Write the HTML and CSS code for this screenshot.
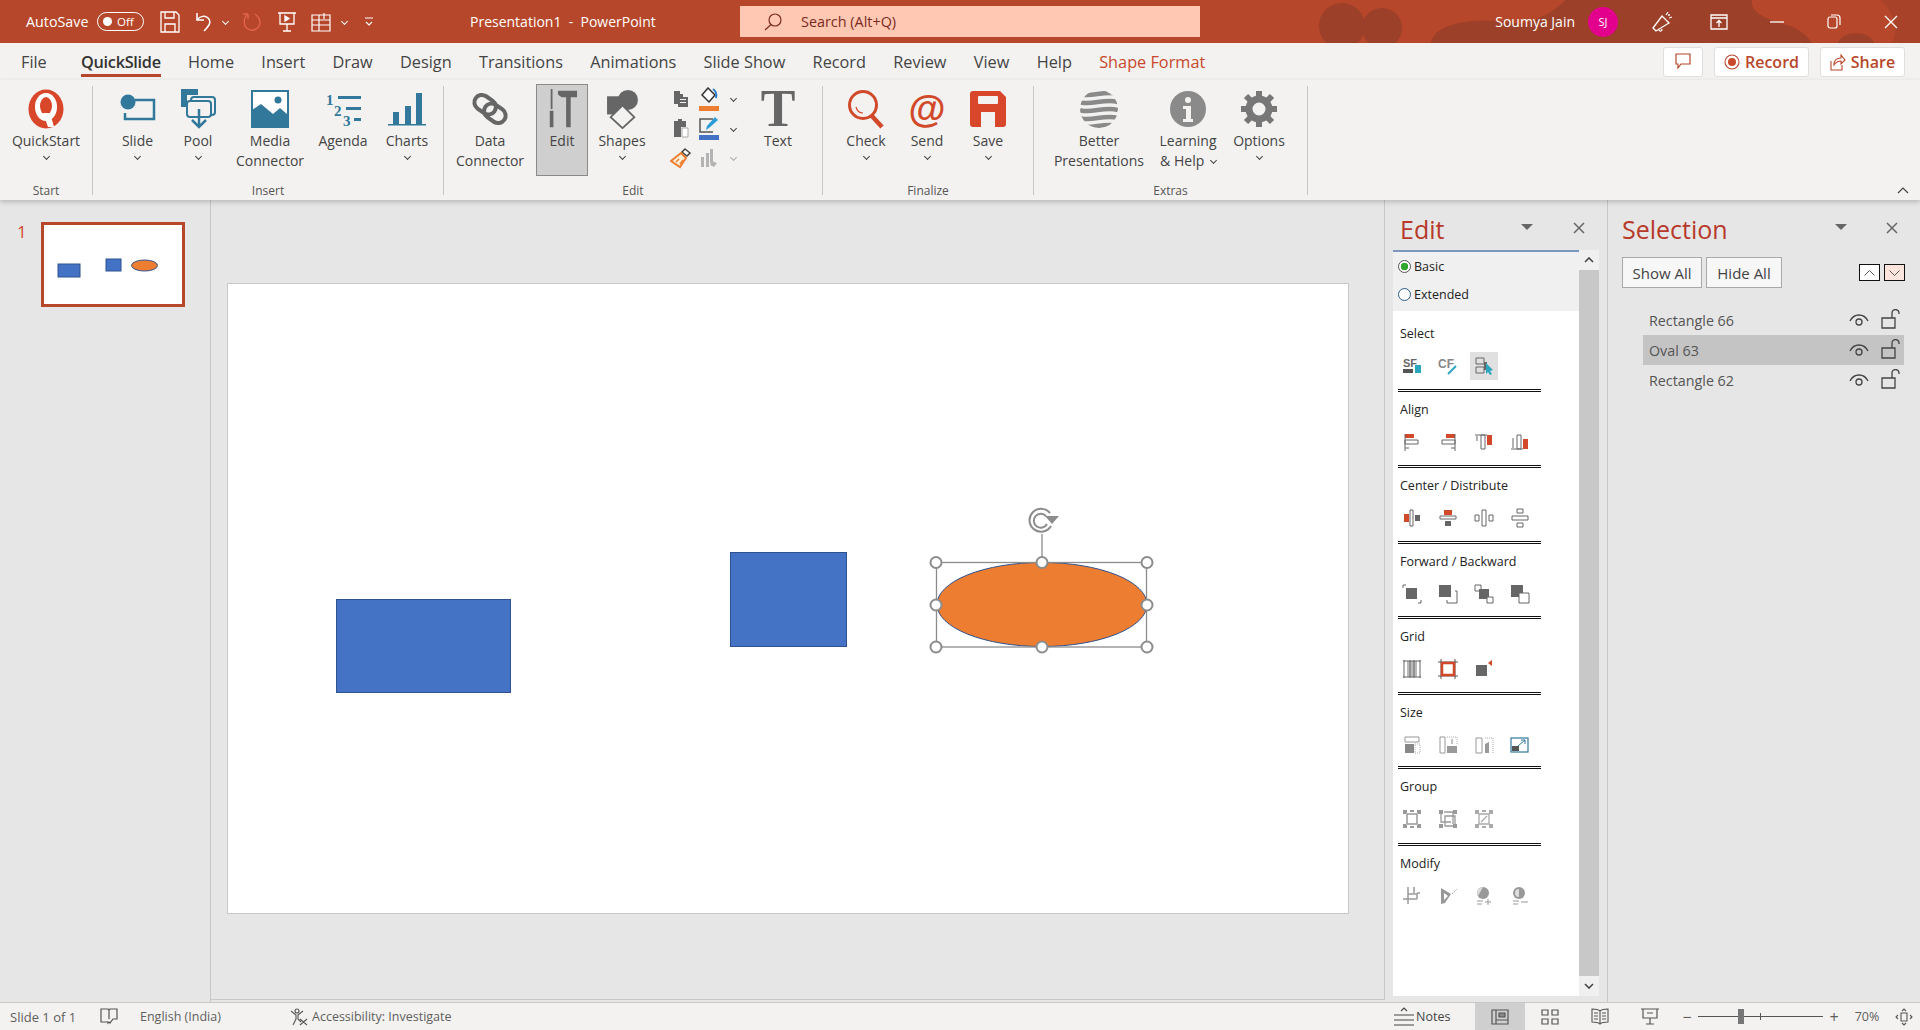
FILE: index.html
```html
<!DOCTYPE html>
<html lang="en">
<head>
    <meta charset="UTF-8">
    <meta name="viewport" content="width=device-width, initial-scale=1.0">
    <title>Presentation1 - PowerPoint</title>
    <link rel="stylesheet" href="styles.css">
</head>
<body>
<div class="app">

    <!-- title bar -->
    <header class="titlebar">
        <svg class="title-art" viewBox="0 0 1920 43" preserveAspectRatio="none">
            <circle cx="1342" cy="26" r="23"/>
            <circle cx="1382" cy="28" r="20"/>
            <path d="M1431 43 C1434 22 1480 16 1520 24 C1540 20 1556 10 1565 0 H1752 C1750 14 1770 20 1790 26 C1800 30 1808 36 1812 43 Z"/>
            <path d="M1838 43 C1842 30 1870 30 1874 43 Z"/>
            <path class="art-soft" d="M1880 0 H1920 V43 H1892 C1900 26 1892 10 1880 0 Z"/>
        </svg>
        <span class="autosave">AutoSave</span>
        <span class="toggle"><i></i>Off</span>
        <svg class="qa ml16" width="20" height="22" viewBox="0 0 20 22" fill="none" stroke="#fff" stroke-width="1.3"><path d="M1 1h15l3 3v17H1z"/><path d="M5 1v6h9V1M5 21v-8h10v8"/></svg>
        <svg class="qa ml15" width="20" height="22" viewBox="0 0 20 22" fill="none" stroke="#fff" stroke-width="1.5"><path d="M2 2v7h7"/><path d="M2 9c3-4 8-5 11-2 4 4 1 8-4 13"/></svg>
        <i class="chev chev-white ml8"></i>
        <svg class="qa ml14" width="20" height="22" viewBox="0 0 20 22" fill="none" stroke="#e4654a" stroke-width="1.4"><path d="M6 3C1 7 1 15 6 18c5 3 11 0 12-6 0-4-2-7-5-9"/><path d="M6 3v5M6 3H1"/></svg>
        <svg class="qa ml15" width="20" height="22" viewBox="0 0 20 22" fill="none" stroke="#fff" stroke-width="1.3"><path d="M1 2h18M3 2v11h14V2M10 13v7M6 20h8"/><path d="M8 5l4 2.500L8 10z" fill="#fff"/></svg>
        <svg class="qa ml14" width="20" height="20" viewBox="0 0 20 20" fill="none" stroke="#fff" stroke-width="1.2"><path d="M1 3h18v16H1zM1 8h18M8 3v16M13 1v6M1 13h18"/></svg>
        <i class="chev chev-white ml11"></i>
        <svg class="qa ml17" width="10" height="10" viewBox="0 0 10 10" fill="none" stroke="#fff" stroke-width="1.100"><path d="M1 1h8M2 5l3 3 3-3"/></svg>
        <span class="doc-title">Presentation1&nbsp; -&nbsp; PowerPoint</span>
        <div class="search">
            <svg width="18" height="18" viewBox="0 0 18 18" fill="none" stroke="#7a2a1c" stroke-width="1.200"><circle cx="11" cy="7" r="6"/><path d="M7 11.500L1 17"/></svg>
            <span>Search (Alt+Q)</span>
        </div>
        <span class="user">Soumya Jain</span>
        <span class="avatar">SJ</span>
        <div class="win w40 ml24">
            <svg width="22" height="22" viewBox="0 0 22 22" fill="none" stroke="#fff" stroke-width="1.300"><path d="M2 17L11 5l7 7-13 8zM5 20l-3-3M8 19c1 2 3 1 3-1M15 4l2-3M18 7l3-1M17 4h2"/></svg>
        </div>
        <div class="win w40 ml17">
            <svg width="18" height="16" viewBox="0 0 18 16" fill="none" stroke="#fff" stroke-width="1.300"><path d="M1 1h16v14H1zM1 4h16M9 13V7M6.500 9L9 6.500 11.500 9"/></svg>
        </div>
        <div class="win w57 ml9"><svg width="14" height="2" viewBox="0 0 14 2"><path d="M0 1h14" stroke="#fff" stroke-width="1.300"/></svg></div>
        <div class="win w57"><svg width="14" height="15" viewBox="0 0 14 15" fill="none" stroke="#fff" stroke-width="1.200"><rect x="1" y="3" width="9" height="11" rx="2"/><path d="M4 1h6a3 3 0 0 1 3 3v7"/></svg></div>
        <div class="win w58"><svg width="14" height="14" viewBox="0 0 14 14"><path d="M1 1l12 12M13 1L1 13" stroke="#fff" stroke-width="1.300"/></svg></div>
    </header>

    <!-- tabs -->
    <nav class="tabs">
        <span class="tab tab-file">File</span>
        <span class="tab tab-active">QuickSlide</span>
        <span class="tab">Home</span>
        <span class="tab">Insert</span>
        <span class="tab">Draw</span>
        <span class="tab">Design</span>
        <span class="tab">Transitions</span>
        <span class="tab">Animations</span>
        <span class="tab">Slide Show</span>
        <span class="tab">Record</span>
        <span class="tab">Review</span>
        <span class="tab">View</span>
        <span class="tab">Help</span>
        <span class="tab tab-context">Shape Format</span>
        <div class="tab-actions">
            <span class="action action-comment">
                <svg width="16" height="17" viewBox="0 0 16 17" fill="none" stroke="#b7472a" stroke-width="1.200"><path d="M1 1h14v10H6l-3 4v-4H1z"/></svg>
            </span>
            <span class="action action-record">
                <svg width="16" height="16" viewBox="0 0 16 16"><circle cx="8" cy="8" r="7" fill="none" stroke="#b7472a" stroke-width="1.100"/><circle cx="8" cy="8" r="4" fill="#c8492b"/></svg>
                Record
            </span>
            <span class="action action-share">
                <svg width="16" height="18" viewBox="0 0 16 18" fill="none" stroke="#b7472a" stroke-width="1.100"><path d="M1 8v9h11v-5M4 12c0-5 3-7 7-7V2l4 5-4 4V8c-3 0-5 1-7 4z"/></svg>
                Share
            </span>
        </div>
    </nav>

    <!-- ribbon -->
    <section class="ribbon">
        <div class="group group-start">
            <div class="group-body">
                <div class="rb w92">
                    <svg class="rb-ic" width="36" height="40" viewBox="0 0 36 40"><ellipse cx="18" cy="20" rx="17.500" ry="19.500" fill="#d9472b"/><ellipse cx="18" cy="18" rx="11" ry="14" fill="#fff"/><ellipse cx="18" cy="17" rx="6" ry="9" fill="#d9472b"/><path d="M15 24l5 14h6l-4-14z" fill="#fff"/></svg>
                    <span class="lbl">QuickStart</span><i class="chev"></i>
                </div>
            </div>
            <div class="group-name">Start</div>
        </div>

        <div class="group group-insert">
            <div class="group-body">
                <div class="rb w55">
                    <svg class="rb-ic" width="36" height="40" viewBox="0 0 36 40"><path d="M15 11h19v19H5v-6" fill="none" stroke="#31789a" stroke-width="2.500"/><circle cx="8" cy="13" r="7.500" fill="#31789a"/></svg>
                    <span class="lbl">Slide</span><i class="chev"></i>
                </div>
                <div class="rb w66">
                    <svg class="rb-ic" width="36" height="40" viewBox="0 0 36 40" fill="none" stroke="#31789a" stroke-width="2"><path d="M1 0h17v6H7v12H1z" fill="#31789a" stroke="none"/><rect x="11" y="8" width="24" height="18" rx="3"/><rect x="7" y="12" width="24" height="16" rx="3" fill="#f3f2f1"/><path d="M19 20v17M12 31l7 7 7-7" stroke-width="2.500"/></svg>
                    <span class="lbl">Pool</span><i class="chev"></i>
                </div>
                <div class="rb w78">
                    <svg class="rb-ic" width="38" height="38" viewBox="0 0 38 38"><rect x="1" y="1" width="36" height="36" fill="#fff" stroke="#31789a" stroke-width="2"/><path d="M1 20l9-6 12 10 7-6 8 7v12H1z" fill="#31789a"/><circle cx="27" cy="10" r="3.500" fill="#31789a"/></svg>
                    <span class="lbl">Media<br>Connector</span>
                </div>
                <div class="rb w68">
                    <svg class="rb-ic" width="38" height="36" viewBox="0 0 38 36" fill="#31789a"><text class="num" x="2" y="14" font-size="15">1</text><text class="num" x="10" y="25" font-size="15">2</text><text class="num" x="19" y="35" font-size="15">3</text><path d="M14 5h23v3H14zM22 16h15v3H22zM30 27h7v3h-7z"/></svg>
                    <span class="lbl">Agenda</span>
                </div>
                <div class="rb w60">
                    <svg class="rb-ic" width="38" height="34" viewBox="0 0 38 34" fill="#31789a"><path d="M5 20h6v12H5zM17 14h6v18h-6zM28 1h6v31h-6z"/><path d="M0 32h38v1.500H0z"/></svg>
                    <span class="lbl">Charts</span><i class="chev"></i>
                </div>
            </div>
            <div class="group-name">Insert</div>
        </div>

        <div class="group group-edit">
            <div class="group-body">
                <div class="rb w92">
                    <svg class="rb-ic" width="38" height="38" viewBox="0 0 38 38" fill="none" stroke="#666" stroke-width="4"><rect x="3" y="7" width="23" height="15" rx="7.500" transform="rotate(35 14 14)"/><rect x="12" y="16" width="23" height="15" rx="7.500" transform="rotate(35 24 24)"/></svg>
                    <span class="lbl">Data<br>Connector</span>
                </div>
                <div class="rb w52 rb-on">
                    <svg class="rb-ic" width="31" height="40" viewBox="0 0 34 44" fill="#666"><path d="M4 0h2v22H4zM3 24h4v18H3zM12 2h21v7h-7v33h-5V9h-5l-4-3z"/></svg>
                    <span class="lbl">Edit</span>
                </div>
                <div class="rb w68">
                    <svg class="rb-ic" width="33" height="40" viewBox="0 0 36 44"><circle cx="24" cy="12" r="11" fill="#666"/><path d="M1 8h16v20H1z" fill="#666"/><path d="M18 18l13 13-13 12L5 31z" fill="#f3f2f1" stroke="#666" stroke-width="2"/></svg>
                    <span class="lbl">Shapes</span><i class="chev"></i>
                </div>
                <div class="tool-grid">
                    <svg width="16" height="18" viewBox="0 0 16 18" fill="#666"><path d="M1 1h6v3h3v3h5v10H5v-3H1zM7 9v1h6V9zm0 3v1h6v-1z"/></svg>
                    <svg width="22" height="24" viewBox="0 0 22 24"><path d="M10 1l7 7-6 7-7-7z" fill="#fff" stroke="#333" stroke-width="1.500"/><path d="M15 2c3 2 4 5 3 9" fill="none" stroke="#2b7cd3" stroke-width="2"/><path d="M1 19h20v5H1z" fill="#ed7d31"/></svg>
                    <i class="chev"></i>
                    <svg width="16" height="20" viewBox="0 0 16 20" fill="#666"><path d="M1 3h4V1h4v2h4v6H8v10H1z"/><path d="M9 10h6v9H9z" fill="#fff" stroke="#aaa"/></svg>
                    <svg width="22" height="24" viewBox="0 0 22 24"><path d="M15 3H2v13h13" fill="none" stroke="#555" stroke-width="1.500"/><path d="M8 14l1-4 8-9 3 3-9 8z" fill="#2b9cd8"/><path d="M1 19h20v5H1z" fill="#4472c4"/></svg>
                    <i class="chev"></i>
                    <svg width="22" height="22" viewBox="0 0 22 22"><path d="M15 2l5 4-3 3-5-4z" fill="#fff" stroke="#444" stroke-width="1.500"/><path d="M11 6l5 5-6 9-9-6z" fill="#fdf0d8" stroke="#ed7d31" stroke-width="2"/><path d="M6 15l3-3M10 17l3-4" stroke="#ed7d31" stroke-width="1.500"/></svg>
                    <svg width="18" height="20" viewBox="0 0 18 20" fill="#b4b4b4"><path d="M1 9h3v10H1zM6 5h3v14H6zM10 1h3v14h-3z"/><path d="M12 13l5 2-3 4-4-2z"/></svg>
                    <i class="chev chev-off"></i>
                </div>
                <div class="rb w68">
                    <span class="glyph-t">T</span>
                    <span class="lbl">Text</span>
                </div>
            </div>
            <div class="group-name">Edit</div>
        </div>

        <div class="group group-finalize">
            <div class="group-body">
                <div class="rb w60">
                    <svg class="rb-ic" width="38" height="40" viewBox="0 0 38 40" fill="none" stroke="#d2492a" stroke-width="3"><circle cx="16" cy="16" r="13.500"/><path d="M24 26l11 12" stroke-width="4.500"/><path d="M9 18c1 4 3 6 7 6" stroke-width="1.200"/></svg>
                    <span class="lbl">Check</span><i class="chev"></i>
                </div>
                <div class="rb w62">
                    <span class="glyph-at">@</span>
                    <span class="lbl">Send</span><i class="chev"></i>
                </div>
                <div class="rb w60">
                    <svg class="rb-ic" width="36" height="36" viewBox="0 0 36 36" fill="#d9472b"><path d="M3 0h27l6 6v27a3 3 0 0 1-3 3H25V21H11v15H3a3 3 0 0 1-3-3V3a3 3 0 0 1 3-3z"/><rect x="8" y="5" width="20" height="8" rx="1" fill="#f3f2f1"/></svg>
                    <span class="lbl">Save</span><i class="chev"></i>
                </div>
            </div>
            <div class="group-name">Finalize</div>
        </div>

        <div class="group group-extras">
            <div class="group-body">
                <div class="rb w98">
                    <svg class="rb-ic" width="38" height="38" viewBox="0 0 38 38"><defs><clipPath id="ball"><circle cx="19" cy="19" r="19"/></clipPath></defs><g clip-path="url(#ball)" fill="none" stroke="#8a8a8a" stroke-width="4.500"><path d="M0 4c10 4 25-4 38 0M0 12c10 4 25-4 38 0M0 20c10 4 25-4 38 0M0 28c10 4 25-4 38 0M0 36c10 4 25-4 38 0"/></g></svg>
                    <span class="lbl">Better<br>Presentations</span>
                </div>
                <div class="rb w80">
                    <svg class="rb-ic" width="36" height="36" viewBox="0 0 36 36"><circle cx="18" cy="18" r="18" fill="#8a8a8a"/><circle cx="18" cy="9" r="3" fill="#f3f2f1"/><path d="M13 15h8v13h2v3H13v-3h3v-10h-3z" fill="#f3f2f1"/></svg>
                    <span class="lbl">Learning<br>&amp; Help <i class="chev chev-inline"></i></span>
                </div>
                <div class="rb w62">
                    <svg class="rb-ic" width="38" height="38" viewBox="0 0 38 38" fill="none" stroke="#777"><circle cx="19" cy="19" r="10" stroke-width="7"/><path d="M19 1v8M19 29v8M1 19h8M29 19h8M6 6l6 6M26 26l6 6M32 6l-6 6M12 26l-6 6" stroke-width="6"/></svg>
                    <span class="lbl">Options</span><i class="chev"></i>
                </div>
            </div>
            <div class="group-name">Extras</div>
        </div>

        <svg class="collapse" width="12" height="7" viewBox="0 0 12 7" fill="none" stroke="#444" stroke-width="1.200"><path d="M1 6l5-5 5 5"/></svg>
    </section>

    <main class="workspace">
        <!-- slide thumbnails -->
        <aside class="thumbs">
            <span class="thumb-num">1</span>
            <div class="thumb">
                <svg width="138" height="79" viewBox="0 0 138 79">
                    <rect x="14" y="39" width="22" height="13" fill="#4472c4" stroke="#2f528f"/>
                    <rect x="62" y="34" width="15" height="12" fill="#4472c4" stroke="#2f528f"/>
                    <ellipse cx="100.500" cy="40.500" rx="13" ry="5.500" fill="#ed7d31" stroke="#2f528f"/>
                </svg>
            </div>
        </aside>

        <!-- slide canvas -->
        <div class="canvas">
            <div class="slide">
                <svg class="shapes" width="1120" height="629" viewBox="0 -1 1120 629">
                    <rect x="108.500" y="314.500" width="174" height="93" fill="#4472c4" stroke="#2f528f"/>
                    <rect x="502.500" y="267.500" width="116" height="94" fill="#4472c4" stroke="#2f528f"/>
                    <ellipse cx="814" cy="319.500" rx="105" ry="42" fill="#ed7d31" stroke="#2f528f"/>
                    <g fill="none" stroke="#8c8c8c" stroke-width="1.300">
                        <rect x="708.500" y="277.500" width="210" height="84.500"/>
                        <path d="M814 277v-28"/>
                    </g>
                    <g fill="none" stroke="#8c8c8c" stroke-width="2">
                        <path d="M822 228a11.500 11.500 0 1 0 1 13"/>
                        <path d="M818 231a7 7 0 1 0 1 8"/>
                    </g>
                    <path d="M817 231h14l-7 8z" fill="#8c8c8c"/>
                    <g fill="#fff" stroke="#8c8c8c" stroke-width="2">
                        <circle cx="708" cy="277.500" r="5.500"/>
                        <circle cx="814" cy="277.500" r="5.500"/>
                        <circle cx="919" cy="277.500" r="5.500"/>
                        <circle cx="708" cy="320" r="5.500"/>
                        <circle cx="919" cy="320" r="5.500"/>
                        <circle cx="708" cy="362" r="5.500"/>
                        <circle cx="814" cy="362" r="5.500"/>
                        <circle cx="919" cy="362" r="5.500"/>
                    </g>
                </svg>
            </div>
        </div>

        <!-- edit pane -->
        <aside class="pane-edit">
            <div class="pane-head">
                <h2 class="pane-title">Edit</h2>
                <i class="pane-arrow arrow-edit"></i>
                <svg class="pane-x" width="12" height="12" viewBox="0 0 12 12"><path d="M1 1l10 10M11 1L1 11" stroke="#666" stroke-width="1.500"/></svg>
            </div>
            <div class="pane-body">
                <div class="pane-content">
                    <div class="modes">
                        <label class="mode"><i class="radio radio-on"></i>Basic</label>
                        <label class="mode"><i class="radio"></i>Extended</label>
                    </div>
                    <div class="sections">
                        <div class="sec">
                            <div class="sec-name">Select</div>
                            <div class="sec-icons">
                                <span class="cell"><svg viewBox="0 0 20 20" width="20" height="20"><text class="mini" x="1" y="11" font-size="11" fill="#666">SF</text><path d="M1 13h10v4H1z" fill="#555"/><path d="M13 9h6v8h-6z" fill="#2aa6c0"/></svg></span>
                                <span class="cell"><svg viewBox="0 0 20 20" width="20" height="20"><text class="mini" x="0" y="12" font-size="12" fill="#888">CF</text><path d="M10 18l8-8" stroke="#2aa6c0" stroke-width="2"/></svg></span>
                                <span class="cell cell-on"><svg viewBox="0 0 20 20" width="20" height="20"><path d="M2 2h8v6H2zM2 11h8v6H2z" fill="none" stroke="#666"/><path d="M10 6h3v8h-3z" fill="#666"/><path d="M12 7l7 7-3 1 2 3-2 1-2-3-2 2z" fill="#2aa6c0"/></svg></span>
                            </div>
                            <div class="sec-rule"></div>
                        </div>
                        <div class="sec">
                            <div class="sec-name">Align</div>
                            <div class="sec-icons">
                                <span class="cell"><svg viewBox="0 0 20 20" width="20" height="20"><path d="M3 2h9v4H3z" fill="#d2492a"/><path d="M3 8h13v4H3zM3 2v17M7 16H3" fill="none" stroke="#666"/></svg></span>
                                <span class="cell"><svg viewBox="0 0 20 20" width="20" height="20"><path d="M8 2h9v4H8z" fill="#d2492a"/><path d="M4 8h13v4H4zM17 2v17M13 16h4" fill="none" stroke="#666"/></svg></span>
                                <span class="cell"><svg viewBox="0 0 20 20" width="20" height="20"><path d="M13 3h5v10h-5z" fill="#d2492a"/><path d="M1 3h12M7 3h4v14H7zM3 9V4" fill="none" stroke="#666"/></svg></span>
                                <span class="cell"><svg viewBox="0 0 20 20" width="20" height="20"><path d="M13 7h5v10h-5z" fill="#d2492a"/><path d="M1 17h12M7 3h4v14H7zM3 6v10" fill="none" stroke="#666"/></svg></span>
                            </div>
                            <div class="sec-rule"></div>
                        </div>
                        <div class="sec">
                            <div class="sec-name">Center / Distribute</div>
                            <div class="sec-icons">
                                <span class="cell"><svg viewBox="0 0 20 20" width="20" height="20"><path d="M2 6h5v8H2z" fill="#d2492a"/><path d="M13 7h5v6h-5z" fill="#666"/><path d="M8 2h3v16H8z" fill="none" stroke="#666"/></svg></span>
                                <span class="cell"><svg viewBox="0 0 20 20" width="20" height="20"><path d="M6 2h8v5H6z" fill="#d2492a"/><path d="M7 13h6v5H7z" fill="#666"/><path d="M2 8h16v3H2z" fill="none" stroke="#666"/></svg></span>
                                <span class="cell"><svg viewBox="0 0 20 20" width="20" height="20"><path d="M1 7h4v6H1zM8 2h4v16H8zM15 7h4v6h-4z" fill="none" stroke="#666"/></svg></span>
                                <span class="cell"><svg viewBox="0 0 20 20" width="20" height="20"><path d="M7 1h6v4H7zM2 8h16v4H2zM7 15h6v4H7z" fill="none" stroke="#666"/></svg></span>
                            </div>
                            <div class="sec-rule"></div>
                        </div>
                        <div class="sec sec-75">
                            <div class="sec-name">Forward / Backward</div>
                            <div class="sec-icons">
                                <span class="cell"><svg viewBox="0 0 20 20" width="20" height="20"><path d="M4 4h11v11H4z" fill="#666"/><path d="M1 4V1h3M19 16v3h-3" fill="none" stroke="#666"/></svg></span>
                                <span class="cell"><svg viewBox="0 0 20 20" width="20" height="20"><path d="M1 1h12v12H1z" fill="#666"/><path d="M17 7h2v12H9v-3" fill="none" stroke="#666"/></svg></span>
                                <span class="cell"><svg viewBox="0 0 20 20" width="20" height="20"><path d="M1 1h6v6H1z" fill="#fff" stroke="#666"/><path d="M5 5h10v10H5z" fill="#666"/><path d="M13 13h6v6h-6z" fill="#fff" stroke="#666"/></svg></span>
                                <span class="cell"><svg viewBox="0 0 20 20" width="20" height="20"><path d="M1 1h12v12H1z" fill="#666"/><path d="M9 9h10v10H9z" fill="#fff" stroke="#666"/></svg></span>
                            </div>
                            <div class="sec-rule"></div>
                        </div>
                        <div class="sec">
                            <div class="sec-name">Grid</div>
                            <div class="sec-icons">
                                <span class="cell"><svg viewBox="0 0 20 20" width="20" height="20"><path d="M5 2h10v16H5z" fill="#bbb"/><path d="M1 2h18M1 18h18M2 1v18M8 1v18M12 1v18M18 1v18" fill="none" stroke="#666"/></svg></span>
                                <span class="cell"><svg viewBox="0 0 20 20" width="20" height="20"><path d="M0 3h20M0 17h20M3 0v20M17 0v20" stroke="#555"/><rect x="4" y="4" width="12" height="12" fill="#fff" stroke="#d2492a" stroke-width="2.500"/></svg></span>
                                <span class="cell"><svg viewBox="0 0 20 20" width="20" height="20"><path d="M2 6h11v11H2z" fill="#666"/><path d="M18 1v6l-4-3z" fill="#d2492a"/></svg></span>
                            </div>
                            <div class="sec-rule"></div>
                        </div>
                        <div class="sec sec-74">
                            <div class="sec-name">Size</div>
                            <div class="sec-icons">
                                <span class="cell"><svg viewBox="0 0 20 20" width="20" height="20"><path d="M3 2h14v5H3z" fill="none" stroke="#999"/><path d="M3 9h9v9H3z" fill="#888"/><path d="M13 9h5v9h-5z" fill="none" stroke="#aaa" stroke-dasharray="1 1"/></svg></span>
                                <span class="cell"><svg viewBox="0 0 20 20" width="20" height="20"><path d="M2 2h5v16H2z" fill="none" stroke="#999"/><path d="M9 11h10v7H9z" fill="#999"/><path d="M9 2h10v8" fill="none" stroke="#aaa" stroke-dasharray="1 1"/><path d="M14 9V4" stroke="#888"/></svg></span>
                                <span class="cell"><svg viewBox="0 0 20 20" width="20" height="20"><path d="M2 3h6v15H2z" fill="none" stroke="#999"/><path d="M11 9l4-2v11h-4z" fill="#999"/><path d="M11 3h8v15" fill="none" stroke="#aaa" stroke-dasharray="1 1"/></svg></span>
                                <span class="cell"><svg viewBox="0 0 20 20" width="20" height="20"><rect x="1" y="3" width="17" height="14" fill="none" stroke="#31789a" stroke-width="1.200"/><path d="M2 11h7v5H2z" fill="#555"/><path d="M8 11l7-6M11 5h4v4" fill="none" stroke="#31789a"/></svg></span>
                            </div>
                            <div class="sec-rule"></div>
                        </div>
                        <div class="sec sec-77">
                            <div class="sec-name">Group</div>
                            <div class="sec-icons">
                                <span class="cell"><svg viewBox="0 0 20 20" width="20" height="20" fill="#999"><path d="M1 1h4v3H4v1H1zM15 1h4v4h-3V4h-1zM1 15h3v1h1v3H1zM16 15h3v4h-4v-3h1zM8 1h4v2H8zM8 17h4v2H8z"/><path d="M5 5h10v10H5z" fill="none" stroke="#999" stroke-width="1.500"/></svg></span>
                                <span class="cell"><svg viewBox="0 0 20 20" width="20" height="20" fill="#999"><path d="M1 1h4v4H1zM15 1h4v4h-4zM1 15h4v4H1zM15 15h4v4h-4z"/><path d="M3 5v8h10M6 3h9v12M7 7h10v10H7z" fill="none" stroke="#999" stroke-width="1.300"/></svg></span>
                                <span class="cell"><svg viewBox="0 0 20 20" width="20" height="20" fill="#aaa"><path d="M1 1h4v4H1zM15 1h4v4h-4zM1 15h4v4H1zM15 15h4v4h-4zM8 1h4v2H8zM8 17h4v2H8z"/><path d="M5 5h10v10H5zM7 13l6-6" fill="none" stroke="#aaa" stroke-width="1.300"/></svg></span>
                            </div>
                            <div class="sec-rule"></div>
                        </div>
                        <div class="sec">
                            <div class="sec-name">Modify</div>
                            <div class="sec-icons">
                                <span class="cell"><svg viewBox="0 0 20 20" width="20" height="20"><path d="M1 13h14M15 7h3M6 8h9v5M6 1v17M12 1v6" fill="none" stroke="#999" stroke-width="1.500"/></svg></span>
                                <span class="cell"><svg viewBox="0 0 20 20" width="20" height="20"><path d="M3 2l10 6-6 9-4 1z" fill="#999"/><path d="M6 7l4 3-4 4" fill="#fff"/><path d="M14 8l5-5" stroke="#aaa" stroke-dasharray="2 1"/></svg></span>
                                <span class="cell"><svg viewBox="0 0 20 20" width="20" height="20"><circle cx="9" cy="7" r="6" fill="#999"/><path d="M9 1a6 6 0 0 0-5 9z" fill="#ddd"/><path d="M3 15h6M14 13v6M11 16h6M3 18h5" stroke="#999"/></svg></span>
                                <span class="cell"><svg viewBox="0 0 20 20" width="20" height="20"><circle cx="9" cy="7" r="6" fill="#999"/><path d="M9 3a4 4 0 0 0-4 4 4 4 0 0 0 4 4z" fill="#ddd"/><path d="M3 15h6M11 16h7M3 18h5" stroke="#999"/></svg></span>
                            </div>
                        </div>
                    </div>
                </div>
                <div class="vscroll">
                    <span class="vs-btn"><svg width="10" height="6" viewBox="0 0 10 6" fill="none" stroke="#444" stroke-width="1.600"><path d="M1 5l4-4 4 4"/></svg></span>
                    <span class="vs-btn"><svg width="10" height="6" viewBox="0 0 10 6" fill="none" stroke="#444" stroke-width="1.600"><path d="M1 1l4 4 4-4"/></svg></span>
                </div>
            </div>
        </aside>

        <!-- selection pane -->
        <aside class="pane-sel">
            <div class="pane-head sel-head">
                <h2 class="pane-title">Selection</h2>
                <i class="pane-arrow arrow-sel"></i>
                <svg class="pane-x" width="12" height="12" viewBox="0 0 12 12"><path d="M1 1l10 10M11 1L1 11" stroke="#666" stroke-width="1.500"/></svg>
            </div>
            <div class="sel-tools">
                <span class="sel-btn btn-show">Show All</span>
                <span class="sel-btn btn-hide">Hide All</span>
                <span class="order order-up"><svg width="11" height="6" viewBox="0 0 11 6" fill="none" stroke="#555"><path d="M.5 5.500l5-5 5 5"/></svg></span>
                <span class="order order-down"><svg width="11" height="6" viewBox="0 0 11 6" fill="none" stroke="#555"><path d="M.5.500l5 5 5-5"/></svg></span>
            </div>
            <ul class="sel-list">
                <li class="sel-row">
                    <span class="sel-name">Rectangle 66</span>
                    <svg class="eye" width="20" height="14" viewBox="0 0 20 14" fill="none" stroke="#444" stroke-width="1.300"><path d="M1 8c4-8 14-8 18 0"/><circle cx="10" cy="9" r="3"/></svg>
                    <svg class="lock" width="20" height="20" viewBox="0 0 20 20" fill="none" stroke="#444" stroke-width="1.300"><path d="M1 9h13v10H1z"/><path d="M11 9V4a3.500 3.500 0 0 1 7 0v1"/></svg>
                </li>
                <li class="sel-row sel-row-on">
                    <span class="sel-name">Oval 63</span>
                    <svg class="eye" width="20" height="14" viewBox="0 0 20 14" fill="none" stroke="#444" stroke-width="1.300"><path d="M1 8c4-8 14-8 18 0"/><circle cx="10" cy="9" r="3"/></svg>
                    <svg class="lock" width="20" height="20" viewBox="0 0 20 20" fill="none" stroke="#444" stroke-width="1.300"><path d="M1 9h13v10H1z"/><path d="M11 9V4a3.500 3.500 0 0 1 7 0v1"/></svg>
                </li>
                <li class="sel-row">
                    <span class="sel-name">Rectangle 62</span>
                    <svg class="eye" width="20" height="14" viewBox="0 0 20 14" fill="none" stroke="#444" stroke-width="1.300"><path d="M1 8c4-8 14-8 18 0"/><circle cx="10" cy="9" r="3"/></svg>
                    <svg class="lock" width="20" height="20" viewBox="0 0 20 20" fill="none" stroke="#444" stroke-width="1.300"><path d="M1 9h13v10H1z"/><path d="M11 9V4a3.500 3.500 0 0 1 7 0v1"/></svg>
                </li>
            </ul>
        </aside>
    </main>

    <!-- status bar -->
    <footer class="status">
        <span class="st-slide">Slide 1 of 1</span>
        <svg class="st-book" width="18" height="17" viewBox="0 0 18 17" fill="none" stroke="#555" stroke-width="1.200"><path d="M1 1h7l1 1 1-1h7v10l-4 0-3 4-1-1-1 1V14H1zM9 2v9"/></svg>
        <span class="st-lang">English (India)</span>
        <svg class="st-a11y" width="18" height="18" viewBox="0 0 18 18" fill="none" stroke="#555" stroke-width="1.100"><circle cx="7" cy="3" r="2"/><path d="M1 3l5 4v4l-3 6M13 3L8 7v4l3 3M10 11l7 6M17 11l-7 6"/></svg>
        <span class="st-access">Accessibility: Investigate</span>
        <span class="st-notes">
            <svg width="20" height="20" viewBox="0 0 20 20" fill="none" stroke="#444" stroke-width="1.100"><path d="M7 4l3-3 3 3M0 8h20M0 13h20M0 18h20"/></svg>
            Notes
        </span>
        <span class="view view-on"><svg width="18" height="16" viewBox="0 0 18 16" fill="none" stroke="#555" stroke-width="1.200"><path d="M1 1h16v14H1zM5 1v14M5 11h12"/><path d="M8 4h6v4H8z" fill="#888"/></svg></span>
        <span class="view"><svg width="18" height="16" viewBox="0 0 18 16" fill="none" stroke="#555" stroke-width="1.200"><path d="M1 1h6v5H1zM11 1h6v5h-6zM1 10h6v5H1zM11 10h6v5h-6z"/></svg></span>
        <span class="view"><svg width="18" height="17" viewBox="0 0 18 17" fill="none" stroke="#555" stroke-width="1.100"><path d="M9 3C7 1 4 1 1 1v13c3 0 6 0 8 2 2-2 5-2 8-2V1c-3 0-6 0-8 2zM9 3v13M3 5h4M3 8h4M3 11h4M11 5h4M11 8h4M11 11h4"/></svg></span>
        <span class="view"><svg width="18" height="17" viewBox="0 0 18 17" fill="none" stroke="#555" stroke-width="1.200"><path d="M0 1h18M2 1v9h14V1M9 10v6M5 16h8M6 5h6"/></svg></span>
        <span class="z-minus">&minus;</span>
        <span class="slider"><i class="slider-tick"></i><i class="slider-thumb"></i></span>
        <span class="z-plus">+</span>
        <span class="z-pct">70%</span>
        <svg class="z-fit" width="18" height="18" viewBox="0 0 18 18" fill="none" stroke="#555" stroke-width="1.100"><path d="M6 5h6v8H6zM7 3l2-2 2 2M7 15l2 2 2-2M3 7L1 9l2 2M15 7l2 2-2 2"/></svg>
    </footer>
</div>
</body>
</html>
```

FILE: styles.css
```css
* {
    box-sizing: border-box;
}

body {
    margin: 0;
    font-family: 'Open Sans', 'Noto Sans', sans-serif;
    color: #444;
    background-color: #e6e6e6;
    overflow: hidden;
}

.app {
    display: flex;
    flex-direction: column;
    width: 1920px;
    height: 1030px;
}

/* title bar */
.titlebar {
    position: relative;
    display: flex;
    align-items: center;
    flex: 0 0 43px;
    padding-left: 26px;
    background-color: #b7472a;
    color: #fff;
    font-size: 14px;
}

.titlebar > * {
    position: relative;
    flex: none;
}

.titlebar > .title-art {
    position: absolute;
    left: 0;
    top: 0;
    width: 1920px;
    height: 43px;
    fill: #9c4029;
}

.art-soft {
    fill: #a8432a;
}

.autosave {
    width: 71px;
    font-size: 14.300px;
}

.toggle {
    display: flex;
    align-items: center;
    gap: 5px;
    width: 47px;
    height: 19px;
    padding-left: 5px;
    border: 1.500px solid #fff;
    border-radius: 10px;
    font-size: 11.500px;
}

.toggle i {
    width: 9px;
    height: 9px;
    border-radius: 50%;
    background-color: #fff;
}

.ml8 { margin-left: 8px; }
.ml9 { margin-left: 9px; }
.ml11 { margin-left: 11px; }
.ml14 { margin-left: 14px; }
.ml15 { margin-left: 15px; }
.ml16 { margin-left: 16px; }
.ml17 { margin-left: 17px; }
.ml24 { margin-left: 24px; }

.chev {
    display: block;
    width: 5px;
    height: 5px;
    border-right: 1px solid #444;
    border-bottom: 1px solid #444;
    transform: rotate(45deg);
}

.chev-white {
    border-color: #fff;
}

.chev-off {
    border-color: #aaa;
}

.chev-inline {
    display: inline-block;
    margin: 0 0 3px 3px;
}

.titlebar > .doc-title {
    position: absolute;
    left: 470px;
}

.titlebar > .search {
    position: absolute;
    left: 740px;
    top: 6px;
    display: flex;
    align-items: center;
    gap: 19px;
    width: 460px;
    height: 31px;
    padding-left: 24px;
    background-color: #ffc8b3;
    color: #7a2a1c;
    font-size: 14.400px;
}

.user {
    margin-left: auto;
    margin-right: 13px;
}

.avatar {
    display: flex;
    align-items: center;
    justify-content: center;
    width: 30px;
    height: 30px;
    border-radius: 50%;
    background-color: #e3008c;
    font-size: 11px;
}

.win {
    display: flex;
    align-items: center;
    justify-content: center;
    height: 43px;
}

.w40 { width: 40px; }
.w57 { width: 57px; }
.w58 { width: 58px; }

/* tabs */
.tabs {
    display: flex;
    align-items: center;
    gap: 27.300px;
    flex: 0 0 37px;
    padding: 0 15px 0 21px;
    background-color: #f3f2f1;
    font-size: 16.300px;
    color: #444;
}

.tab {
    position: relative;
}

.tab-file {
    margin-right: 7px;
}

.tab-active {
    font-weight: 600;
    letter-spacing: -0.3px;
    color: #333;
}

.tab-active::after {
    content: "";
    position: absolute;
    left: 0;
    right: 0;
    bottom: -4px;
    height: 3px;
    background-color: #b7472a;
}

.tab-context {
    color: #c8492b;
}

.tab-actions {
    display: flex;
    gap: 11px;
    margin-left: auto;
}

.action {
    display: flex;
    align-items: center;
    justify-content: center;
    gap: 5px;
    height: 30px;
    border: 1px solid #e1dfdd;
    border-radius: 3px;
    background-color: #fff;
    color: #b7472a;
    font-size: 16px;
    font-weight: 600;
}

.action-comment { width: 40px; }
.action-record { width: 95px; }
.action-share { width: 85px; }

/* ribbon */
.ribbon {
    position: relative;
    z-index: 2;
    display: flex;
    flex: 0 0 120px;
    padding-top: 6px;
    background-color: #f3f2f1;
    box-shadow: 0 2px 5px rgba(0, 0, 0, 0.2);
}

.group {
    display: flex;
    flex-direction: column;
    height: 109px;
    border-right: 1px solid #c8c6c4;
}

.group-start { width: 93px; }
.group-insert { width: 351px; padding-left: 17px; }
.group-edit { width: 379px; }
.group-finalize { width: 211px; padding-left: 13px; }
.group-extras { width: 274px; padding-left: 16px; }

.group-insert .group-name { margin-left: -17px; }
.group-finalize .group-name { margin-left: -13px; }
.group-extras .group-name { margin-left: -16px; }

.group-body {
    display: flex;
    height: 92px;
    margin-top: -2px;
}

.group-name {
    margin-top: 7px;
    line-height: 16px;
    font-size: 12px;
    text-align: center;
    color: #555;
}

.rb {
    display: flex;
    flex-direction: column;
    align-items: center;
    flex: none;
    height: 92px;
    font-size: 14px;
    line-height: 20px;
    text-align: center;
    color: #444;
}

.rb-ic {
    flex: none;
    height: 40px;
    margin: 5px 0 2px;
}

.glyph-t,
.glyph-at {
    flex: none;
    display: block;
    height: 40px;
    margin: 5px 0 2px;
    line-height: 40px;
}

.glyph-t {
    font-family: 'Liberation Serif', serif;
    font-size: 52px;
    font-weight: 700;
    color: #666;
}

.glyph-at {
    font-family: 'Liberation Sans', sans-serif;
    font-size: 38px;
    font-weight: 700;
    color: #d2492a;
}

.lbl {
    white-space: nowrap;
}

.rb .chev {
    margin-top: 3px;
}

.rb .chev-inline {
    margin: 0 0 3px 3px;
}

.rb-on {
    border: 1px solid #8a8a8a;
    background-color: #cfcfcf;
}

.rb-on .rb-ic {
    margin-top: 4px;
}

.w52 { width: 52px; }
.w55 { width: 55px; }
.w60 { width: 60px; }
.w62 { width: 62px; }
.w66 { width: 66px; }
.w68 { width: 68px; }
.w78 { width: 78px; }
.w80 { width: 80px; }
.w92 { width: 92px; }
.w98 { width: 98px; }

.tool-grid {
    display: grid;
    grid-template-columns: 28px 28px 20px;
    grid-auto-rows: 29.500px;
    place-items: center;
    width: 88px;
    padding-left: 11px;
}

.num {
    font-family: 'Liberation Serif', serif;
    font-weight: bold;
}

.mini {
    font-family: 'Liberation Sans', sans-serif;
    font-weight: bold;
}

.collapse {
    position: absolute;
    right: 11px;
    bottom: 6px;
}

/* workspace */
.workspace {
    display: flex;
    flex: 1;
    min-height: 0;
    border-bottom: 1px solid #c8c8c8;
}

.thumbs {
    display: flex;
    flex: 0 0 211px;
    padding: 22px 0 0 17px;
    border-right: 1px solid #c8c8c8;
}

.thumb-num {
    width: 24px;
    font-size: 17px;
    line-height: 20px;
    color: #d2492a;
}

.thumb {
    width: 144px;
    height: 85px;
    border: 3px solid #b7472a;
    background-color: #fff;
}

.thumb svg {
    display: block;
}

.canvas {
    flex: 0 0 1174px;
    height: 800px;
    margin-right: 8px;
    padding: 83px 0 0 16px;
    border-right: 1px solid #c8c8c8;
    border-bottom: 1px solid #c8c8c8;
}

.slide {
    width: 1122px;
    height: 631px;
    border: 1px solid #c8c8c8;
    background-color: #fff;
}

.shapes {
    display: block;
    overflow: visible;
}

/* task panes */
.pane-edit {
    display: flex;
    flex-direction: column;
    flex: 0 0 215px;
    border-right: 1px solid #c8c8c8;
    padding-bottom: 6px;
}

.pane-head {
    display: flex;
    align-items: center;
    height: 50px;
    flex: 0 0 50px;
    padding: 8px 0 0 7px;
}

.pane-title {
    margin: 0;
    font-size: 25px;
    font-weight: 400;
    color: #b7392a;
}

.pane-arrow {
    width: 0;
    height: 0;
    border-left: 6px solid transparent;
    border-right: 6px solid transparent;
    border-top: 6px solid #666;
    margin-top: -4px;
}

.arrow-edit {
    margin-left: auto;
    margin-right: 40px;
}

.pane-x {
    margin: -3px 22px 0 0;
}

.pane-body {
    display: flex;
    flex: 1;
    min-height: 0;
}

.pane-content {
    flex: 0 0 186px;
    background-color: #fff;
    border-top: 2px solid #7d96bd;
}

.modes {
    height: 59px;
    padding: 0 0 0 5px;
    background-color: #f0f0f0;
}

.mode {
    display: flex;
    align-items: center;
    gap: 3px;
    height: 28px;
    font-size: 12.500px;
    color: #222;
}

.radio {
    width: 13px;
    height: 13px;
    border: 1px solid #2a5d8a;
    border-radius: 50%;
    background-color: #fff;
}

.radio-on {
    border-color: #555;
    background: radial-gradient(circle, #2fa82f 0 3.500px, #fff 4px);
}

.sections {
    padding-top: 5px;
}

.sec {
    display: flex;
    flex-direction: column;
    height: 76px;
    padding: 8px 0 0 5px;
}

.sec-75 { height: 75px; }
.sec-74 { height: 74px; }
.sec-77 { height: 77px; }

.sec-name {
    height: 20px;
    padding-left: 2px;
    font-size: 12.500px;
    line-height: 20px;
    color: #222;
}

.sec-icons {
    display: flex;
    gap: 8px;
    height: 28px;
    margin-top: 8px;
}

.cell {
    display: flex;
    align-items: center;
    justify-content: center;
    width: 28px;
    height: 28px;
}

.cell-on {
    background-color: #e0e0e0;
}

.sec-rule {
    width: 143px;
    height: 3px;
    margin-top: auto;
    border-top: 1px solid #111;
    border-bottom: 1px solid #111;
}

.vscroll {
    display: flex;
    flex-direction: column;
    justify-content: space-between;
    flex: 0 0 20px;
    background-color: #c8c8c8;
}

.vs-btn {
    display: flex;
    align-items: center;
    justify-content: center;
    height: 20px;
    background-color: #f0f0f0;
}

.pane-sel {
    flex: 1;
    min-width: 0;
}

.sel-head {
    padding-left: 14px;
}

.arrow-sel {
    margin-left: auto;
    margin-right: 39px;
}

.sel-tools {
    display: flex;
    align-items: center;
    height: 31px;
    margin-top: 7px;
    padding-left: 14px;
}

.sel-btn {
    display: flex;
    align-items: center;
    justify-content: center;
    height: 31px;
    border: 1px solid #a9a9a9;
    background-color: #f7f7f7;
    font-size: 15px;
    color: #444;
}

.btn-show {
    width: 80px;
    margin-right: 4px;
}

.btn-hide {
    width: 76px;
    margin-right: 77px;
}

.order {
    display: flex;
    align-items: center;
    justify-content: center;
    width: 21px;
    height: 17px;
    border: 1px solid #111;
    background-color: #fff;
}

.order-down {
    margin-left: 4px;
    background-color: #fde4dc;
}

.sel-list {
    margin: 17px 0 0 35px;
    padding: 0;
    width: 261px;
    list-style: none;
}

.sel-row {
    display: flex;
    align-items: center;
    height: 30px;
    padding-left: 6px;
    font-size: 14.300px;
    color: #555;
}

.sel-row-on {
    background-color: #c4c4c4;
}

.sel-name {
    flex: 1;
}

.eye {
    margin-right: 12px;
}

.lock {
    margin: -2px 3px 0 0;
}

/* status bar */
.status {
    display: flex;
    align-items: center;
    flex: 0 0 27px;
    background-color: #f3f2f1;
    font-size: 12.500px;
    color: #605e5c;
}

.st-slide { width: 100px; padding-left: 10px; font-size: 13px; }
.st-book { width: 18px; margin-right: 22px; }
.st-lang { width: 150px; }
.st-a11y { margin-right: 4px; }
.st-access { width: 1082px; white-space: nowrap; }

.st-notes {
    display: flex;
    align-items: center;
    gap: 2px;
    width: 81px;
    color: #444;
}

.view {
    display: flex;
    align-items: center;
    justify-content: center;
    flex: none;
    width: 50px;
    height: 27px;
}

.view-on {
    background-color: #cfcfcf;
}

.z-minus {
    width: 12px;
    margin-left: 6px;
    font-size: 16px;
    text-align: center;
}

.slider {
    position: relative;
    width: 125px;
    height: 1px;
    margin: 0 4px 0 5px;
    background-color: #555;
}

.slider-tick {
    position: absolute;
    left: 62px;
    top: -3px;
    width: 1px;
    height: 7px;
    background-color: #555;
}

.slider-thumb {
    position: absolute;
    left: 40px;
    top: -7px;
    width: 6px;
    height: 15px;
    background-color: #777;
}

.z-plus {
    width: 14px;
    font-size: 16px;
    text-align: center;
}

.z-pct {
    width: 46px;
    margin-left: 3px;
    text-align: center;
}

.z-fit {
    margin-left: 5px;
}
```
